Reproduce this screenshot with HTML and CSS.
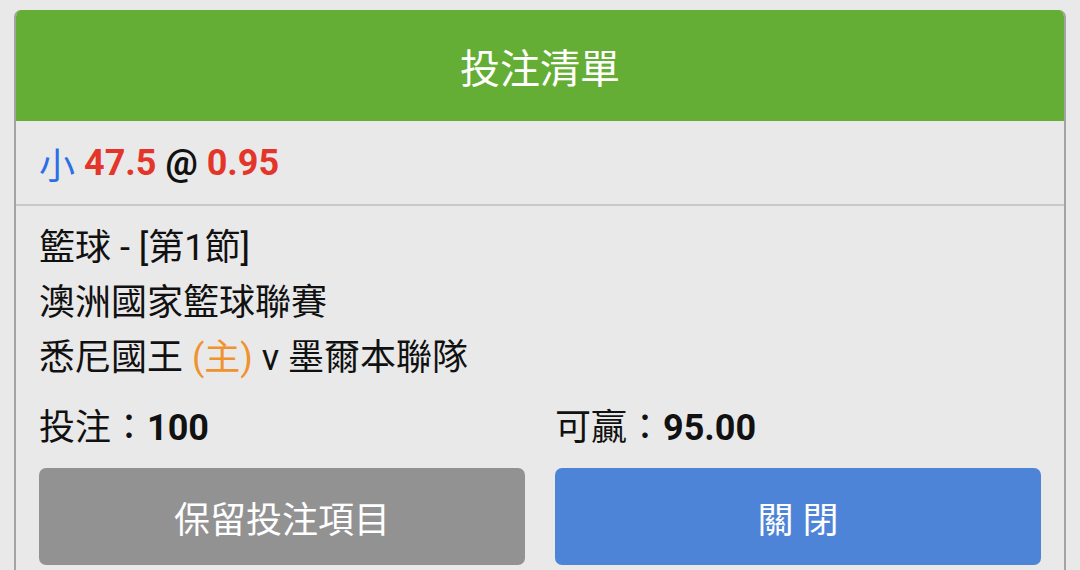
FILE: index.html
```html
<!DOCTYPE html>
<html lang="zh-Hant">
<head>
  <meta charset="UTF-8" />
  <meta name="viewport" content="width=device-width, initial-scale=1.0" />
  <title>投注清單</title>
  <link rel="stylesheet" href="styles.css">
</head>
<body>
  <div class="slip">
    <div class="slip-header">投注清單</div>
    <div class="slip-odds">
      <span class="side">小</span>
      <span class="num">47.5</span>
      <span class="at">@</span>
      <span class="num">0.95</span>
    </div>
    <div class="slip-body">
      <div class="line">籃球 - [第1節]</div>
      <div class="line">澳洲國家籃球聯賽</div>
      <div class="line">悉尼國王 <span class="home">(主)</span> v 墨爾本聯隊</div>
      <div class="stakes">
        <div>投注：<b>100</b></div>
        <div>可贏：<b>95.00</b></div>
      </div>
      <div class="actions">
        <button class="btn btn-keep">保留投注項目</button>
        <button class="btn btn-close">關 閉</button>
      </div>
    </div>
  </div>
</body>
</html>
```

FILE: styles.css
```css
body {
  margin: 0;
  padding: 10px 14px 0;
  background-color: #e9e9e9;
  font-family: Roboto, "Noto Sans CJK TC", sans-serif;
  color: #111;
}
.slip {
  border-radius: 7px 7px 0 0;
  overflow: hidden;
  border-left: 2px solid #a3a3a3;
  border-right: 2px solid #a3a3a3;
}
.slip-header {
  margin: 0 -2px;
  height: 111px;
  background-color: #65ae35;
  color: #fff;
  font-size: 40px;
  display: flex;
  align-items: center;
  justify-content: center;
}
.slip-odds {
  height: 83px;
  padding: 0 23px;
  display: flex;
  align-items: center;
  gap: 9px;
  font-size: 36px;
  border-bottom: 2px solid #c9c9c9;
}
.side {
  color: #2c6ee6;
}
.num {
  color: #e4352a;
  font-weight: bold;
}
.at {
  font-weight: bold;
  color: #111;
}
.slip-body {
  padding: 15px 23px 10px;
  font-size: 36px;
}
.line {
  line-height: 55px;
}
.home {
  color: #f0922e;
}
.stakes {
  display: grid;
  grid-template-columns: 1fr 1fr;
  gap: 30px;
  line-height: 55px;
  margin-top: 15px;
}
.stakes b {
  font-weight: bold;
}
.actions {
  display: grid;
  grid-template-columns: 1fr 1fr;
  gap: 30px;
  margin-top: 12px;
}
.btn {
  height: 97px;
  border: none;
  border-radius: 7px;
  color: #fff;
  font-family: Roboto, "Noto Sans CJK TC", sans-serif;
  font-size: 36px;
}
.btn-keep {
  background-color: #929292;
}
.btn-close {
  background-color: #4e84d8;
}
```
